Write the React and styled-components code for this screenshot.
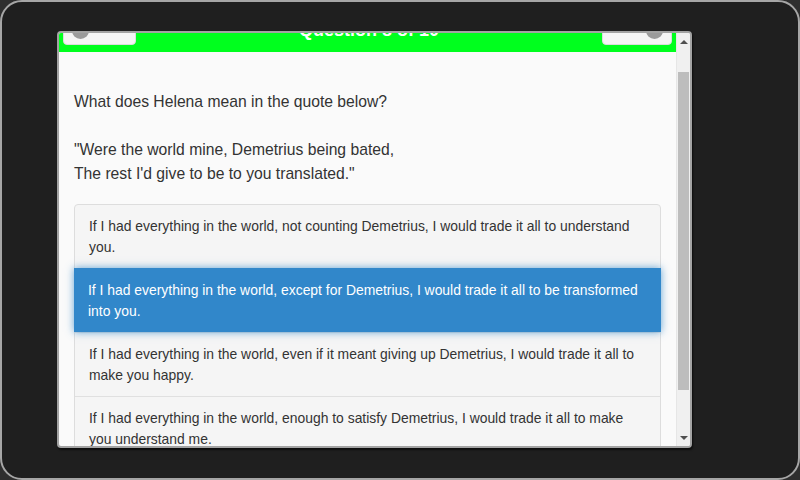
import React from "react";
import styled, { createGlobalStyle } from "styled-components";

const GlobalStyle = createGlobalStyle`
  html, body {
    margin: 0;
    padding: 0;
    background: #2e2e2e;
  }
  body {
    font-family: "Liberation Sans", Arial, sans-serif;
  }
`;

const ANSWERS = [
  "If I had everything in the world, not counting Demetrius, I would trade it all to understand you.",
  "If I had everything in the world, except for Demetrius, I would trade it all to be transformed into you.",
  "If I had everything in the world, even if it meant giving up Demetrius, I would trade it all to make you happy.",
  "If I had everything in the world, enough to satisfy Demetrius, I would trade it all to make you understand me.",
];

const App = () => {
  return (
    <>
      <GlobalStyle />
      <Frame>
        <Window>
          <Content>
            <Header>
              <NavButton $width={73}>
                <Dot />
              </NavButton>
              <Title>Question 8 of 10</Title>
              <NavButton $width={70} $right>
                <Dot />
              </NavButton>
            </Header>
            <Body>
              <Question>
                What does Helena mean in the quote below?
                <br />
                <br />
                "Were the world mine, Demetrius being bated,
                <br />
                The rest I'd give to be to you translated."
              </Question>
              <AnswerList>
                {ANSWERS.map((text, i) => (
                  <Answer key={i} $active={i === 1}>
                    {text}
                  </Answer>
                ))}
              </AnswerList>
            </Body>
          </Content>
          <ScrollBar>
            <Arrow>
              <ArrowUp />
            </Arrow>
            <Track>
              <Thumb />
            </Track>
            <Arrow>
              <ArrowDown />
            </Arrow>
          </ScrollBar>
        </Window>
      </Frame>
    </>
  );
};

const Frame = styled.div`
  width: 800px;
  height: 480px;
  box-sizing: border-box;
  border: 2px solid #a6a6a6;
  border-radius: 22px;
  background: #1f1f1f;
  padding: 29px 0 0 55px;
  display: flex;
  align-items: flex-start;
`;

const Window = styled.div`
  width: 635px;
  height: 417px;
  box-sizing: border-box;
  border: 2px solid #a3a3a3;
  border-radius: 4px;
  background: #fafafa;
  box-shadow: 1px 2px 2px rgba(0, 0, 0, 0.6);
  display: flex;
  overflow: hidden;
`;

const Content = styled.div`
  flex: 1;
  min-width: 0;
  overflow: hidden;
  display: flex;
  flex-direction: column;
`;

const Header = styled.div`
  margin-top: -30px;
  height: 49px;
  flex-shrink: 0;
  background: #00ff1e;
  padding: 0 4px;
  display: flex;
  justify-content: space-between;
  align-items: flex-start;
`;

const NavButton = styled.div`
  width: ${(p) => p.$width}px;
  height: 32px;
  margin-top: 10px;
  box-sizing: border-box;
  background: #f5f5f5;
  border: 1px solid #dcdcdc;
  border-radius: 4px;
  padding: 8px 8px 0;
  display: flex;
  justify-content: ${(p) => (p.$right ? "flex-end" : "flex-start")};
`;

const Dot = styled.span`
  width: 17px;
  height: 17px;
  border-radius: 50%;
  background: #9b9b9b;
`;

const Title = styled.div`
  color: #ffffff;
  font-weight: bold;
  font-size: 18px;
  line-height: 24px;
  padding-top: 15px;
  white-space: nowrap;
`;

const Body = styled.div`
  padding: 38px 15px 0;
`;

const Question = styled.p`
  margin: 0 0 18px;
  font-size: 15.7px;
  line-height: 24px;
  color: #333333;
`;

const AnswerList = styled.div`
  border: 1px solid #dddddd;
  border-radius: 4px;
  background: #f5f5f5;
`;

const Answer = styled.div`
  position: relative;
  padding: 11px 14px 10px;
  font-size: 13.9px;
  line-height: 21px;
  color: ${(p) => (p.$active ? "#ffffff" : "#333333")};
  background: ${(p) => (p.$active ? "#3187ca" : "transparent")};
  border-top: 1px solid ${(p) => (p.$active ? "#3187ca" : "#e0e0e0")};
  margin: ${(p) => (p.$active ? "0 -1px" : "0")};
  box-shadow: ${(p) => (p.$active ? "0 0 8px rgba(49, 135, 202, 0.75)" : "none")};
  z-index: ${(p) => (p.$active ? 1 : 0)};

  &:first-child {
    border-top: none;
  }
`;

const ScrollBar = styled.div`
  width: 14px;
  flex-shrink: 0;
  background: #f0f0f0;
  border-left: 1px solid #e6e6e6;
  box-sizing: border-box;
  display: flex;
  flex-direction: column;
`;

const Arrow = styled.div`
  height: 17px;
  flex-shrink: 0;
  display: flex;
  align-items: center;
  justify-content: center;
`;

const ArrowUp = styled.span`
  width: 0;
  height: 0;
  border-left: 4px solid transparent;
  border-right: 4px solid transparent;
  border-bottom: 4px solid #505050;
`;

const ArrowDown = styled(ArrowUp)`
  border-bottom: none;
  border-top: 4px solid #505050;
`;

const Track = styled.div`
  flex: 1;
  padding: 22px 1px 0;
`;

const Thumb = styled.div`
  height: 318px;
  background: #bdbdbd;
`;

export default App;
